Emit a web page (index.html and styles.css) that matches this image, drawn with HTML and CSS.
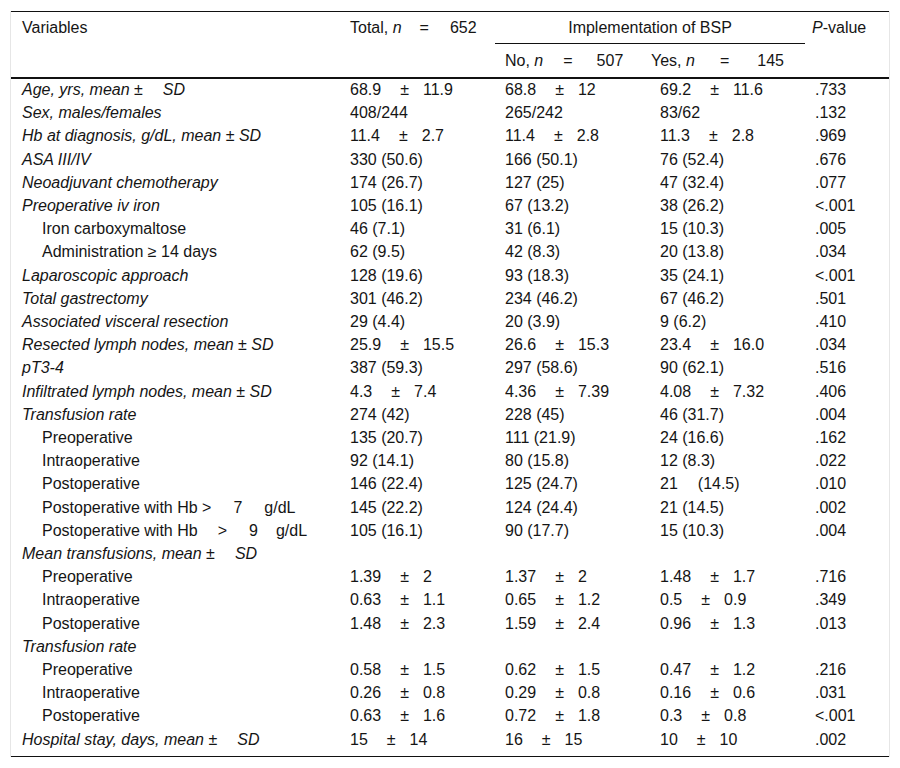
FILE: index.html
```html
<!DOCTYPE html>
<html>
<head>
<meta charset="utf-8">
<link rel="stylesheet" href="styles.css">
</head>
<body>
<div class="wrap">
<table class="tbl">
<colgroup>
<col class="c-var"><col class="c-num"><col class="c-num"><col class="c-num"><col class="c-p">
</colgroup>
<thead>
<tr class="h1">
<th class="first" rowspan="2">Variables</th>
<th rowspan="2">Total, <i>n</i><span class="eq">=</span>652</th>
<th class="group" colspan="2">Implementation of BSP</th>
<th class="pv" rowspan="2"><i>P</i>-value</th>
</tr>
<tr class="h2">
<th>No, <i>n</i><span class="eq wide">=</span>507</th>
<th class="yes">Yes, <i>n</i><span class="eq wider">=</span>145</th>
</tr>
</thead>
<tbody>
<tr><td class="first it">Age, yrs, mean ±<span class="g20"></span>SD</td><td>68.9<span class="pm">±</span>11.9</td><td>68.8<span class="pm">±</span>12</td><td>69.2<span class="pm">±</span>11.6</td><td>.733</td></tr>
<tr><td class="first it">Sex, males/females</td><td>408/244</td><td>265/242</td><td>83/62</td><td>.132</td></tr>
<tr><td class="first it">Hb at diagnosis, g/dL, mean ± SD</td><td>11.4<span class="pm">±</span>2.7</td><td>11.4<span class="pm">±</span>2.8</td><td>11.3<span class="pm">±</span>2.8</td><td>.969</td></tr>
<tr><td class="first it">ASA III/IV</td><td>330 (50.6)</td><td>166 (50.1)</td><td>76 (52.4)</td><td>.676</td></tr>
<tr><td class="first it">Neoadjuvant chemotherapy</td><td>174 (26.7)</td><td>127 (25)</td><td>47 (32.4)</td><td>.077</td></tr>
<tr><td class="first it">Preoperative iv iron</td><td>105 (16.1)</td><td>67 (13.2)</td><td>38 (26.2)</td><td>&lt;.001</td></tr>
<tr><td class="first sub">Iron carboxymaltose</td><td>46 (7.1)</td><td>31 (6.1)</td><td>15 (10.3)</td><td>.005</td></tr>
<tr><td class="first sub">Administration ≥ 14 days</td><td>62 (9.5)</td><td>42 (8.3)</td><td>20 (13.8)</td><td>.034</td></tr>
<tr><td class="first it">Laparoscopic approach</td><td>128 (19.6)</td><td>93 (18.3)</td><td>35 (24.1)</td><td>&lt;.001</td></tr>
<tr><td class="first it">Total gastrectomy</td><td>301 (46.2)</td><td>234 (46.2)</td><td>67 (46.2)</td><td>.501</td></tr>
<tr><td class="first it">Associated visceral resection</td><td>29 (4.4)</td><td>20 (3.9)</td><td>9 (6.2)</td><td>.410</td></tr>
<tr><td class="first it">Resected lymph nodes, mean ± SD</td><td>25.9<span class="pm">±</span>15.5</td><td>26.6<span class="pm">±</span>15.3</td><td>23.4<span class="pm">±</span>16.0</td><td>.034</td></tr>
<tr><td class="first it">pT3-4</td><td>387 (59.3)</td><td>297 (58.6)</td><td>90 (62.1)</td><td>.516</td></tr>
<tr><td class="first it">Infiltrated lymph nodes, mean ± SD</td><td>4.3<span class="pm">±</span>7.4</td><td>4.36<span class="pm">±</span>7.39</td><td>4.08<span class="pm">±</span>7.32</td><td>.406</td></tr>
<tr><td class="first it">Transfusion rate</td><td>274 (42)</td><td>228 (45)</td><td>46 (31.7)</td><td>.004</td></tr>
<tr><td class="first sub">Preoperative</td><td>135 (20.7)</td><td>111 (21.9)</td><td>24 (16.6)</td><td>.162</td></tr>
<tr><td class="first sub">Intraoperative</td><td>92 (14.1)</td><td>80 (15.8)</td><td>12 (8.3)</td><td>.022</td></tr>
<tr><td class="first sub">Postoperative</td><td>146 (22.4)</td><td>125 (24.7)</td><td>21<span class="g20"></span>(14.5)</td><td>.010</td></tr>
<tr><td class="first sub">Postoperative with Hb &gt;<span class="g22"></span>7<span class="g22"></span>g/dL</td><td>145 (22.2)</td><td>124 (24.4)</td><td>21 (14.5)</td><td>.002</td></tr>
<tr><td class="first sub">Postoperative with Hb<span class="g20"></span>&gt;<span class="g22"></span>9<span class="g18"></span>g/dL</td><td>105 (16.1)</td><td>90 (17.7)</td><td>15 (10.3)</td><td>.004</td></tr>
<tr><td class="first it">Mean transfusions, mean ±<span class="g20"></span>SD</td><td></td><td></td><td></td><td></td></tr>
<tr><td class="first sub">Preoperative</td><td>1.39<span class="pm">±</span>2</td><td>1.37<span class="pm">±</span>2</td><td>1.48<span class="pm">±</span>1.7</td><td>.716</td></tr>
<tr><td class="first sub">Intraoperative</td><td>0.63<span class="pm">±</span>1.1</td><td>0.65<span class="pm">±</span>1.2</td><td>0.5<span class="pm">±</span>0.9</td><td>.349</td></tr>
<tr><td class="first sub">Postoperative</td><td>1.48<span class="pm">±</span>2.3</td><td>1.59<span class="pm">±</span>2.4</td><td>0.96<span class="pm">±</span>1.3</td><td>.013</td></tr>
<tr><td class="first it">Transfusion rate</td><td></td><td></td><td></td><td></td></tr>
<tr><td class="first sub">Preoperative</td><td>0.58<span class="pm">±</span>1.5</td><td>0.62<span class="pm">±</span>1.5</td><td>0.47<span class="pm">±</span>1.2</td><td>.216</td></tr>
<tr><td class="first sub">Intraoperative</td><td>0.26<span class="pm">±</span>0.8</td><td>0.29<span class="pm">±</span>0.8</td><td>0.16<span class="pm">±</span>0.6</td><td>.031</td></tr>
<tr><td class="first sub">Postoperative</td><td>0.63<span class="pm">±</span>1.6</td><td>0.72<span class="pm">±</span>1.8</td><td>0.3<span class="pm">±</span>0.8</td><td>&lt;.001</td></tr>
<tr class="last"><td class="first it">Hospital stay, days, mean ±<span class="g20"></span>SD</td><td>15<span class="pm">±</span>14</td><td>16<span class="pm">±</span>15</td><td>10<span class="pm">±</span>10</td><td>.002</td></tr>
</tbody>
</table>
</div>
</body>
</html>
```
FILE: styles.css
```css
html, body {
  margin: 0;
  padding: 0;
  background: #fff;
}
body {
  font-family: "Liberation Sans", Arial, sans-serif;
  font-size: 16px;
  color: #151515;
}
.wrap {
  margin: 11px 0 0 10px;
  width: 878px;
  border-left: 1px solid #e6e6e6;
  border-right: 1px solid #e6e6e6;
}
.tbl {
  width: 878px;
  border-collapse: collapse;
  table-layout: fixed;
  border-top: 1px solid #111;
  border-bottom: 1px solid #111;
}
.c-var { width: 329px; }
.c-num { width: 155px; }
.c-p { width: 84px; }
th {
  font-weight: normal;
  text-align: left;
  vertical-align: top;
  padding: 6px 10px;
  line-height: 19px;
  white-space: nowrap;
}
.h1 th { padding-top: 6px; padding-bottom: 6px; }
.h2 th { padding-top: 7px; padding-bottom: 7px; border-bottom: 2px solid #111; }
.h1 th[rowspan] { border-bottom: 2px solid #111; }
th.first { padding-left: 11px; }
th.group {
  text-align: center;
  border-bottom: 1px solid #111;
}
th.yes { padding-left: 1px; }
th.pv { padding-left: 7px; }
td {
  padding: 1px 10px 3px;
  line-height: 19.2px;
  white-space: nowrap;
  vertical-align: middle;
}
.last td { padding-bottom: 7px; }
td.first { padding-left: 11px; }
td.it { font-style: italic; }
td.sub { padding-left: 31px; }
.pm {
  display: inline-block;
  margin: 0 14px 0 19px;
}
.eq {
  display: inline-block;
  margin: 0 21px 0 18px;
}
.eq.wide { margin: 0 24px 0 20px; }
.eq.wider { margin: 0 28px 0 25px; }
.g18 { display: inline-block; width: 18px; }
.g20 { display: inline-block; width: 20px; }
.g22 { display: inline-block; width: 22px; }
```
